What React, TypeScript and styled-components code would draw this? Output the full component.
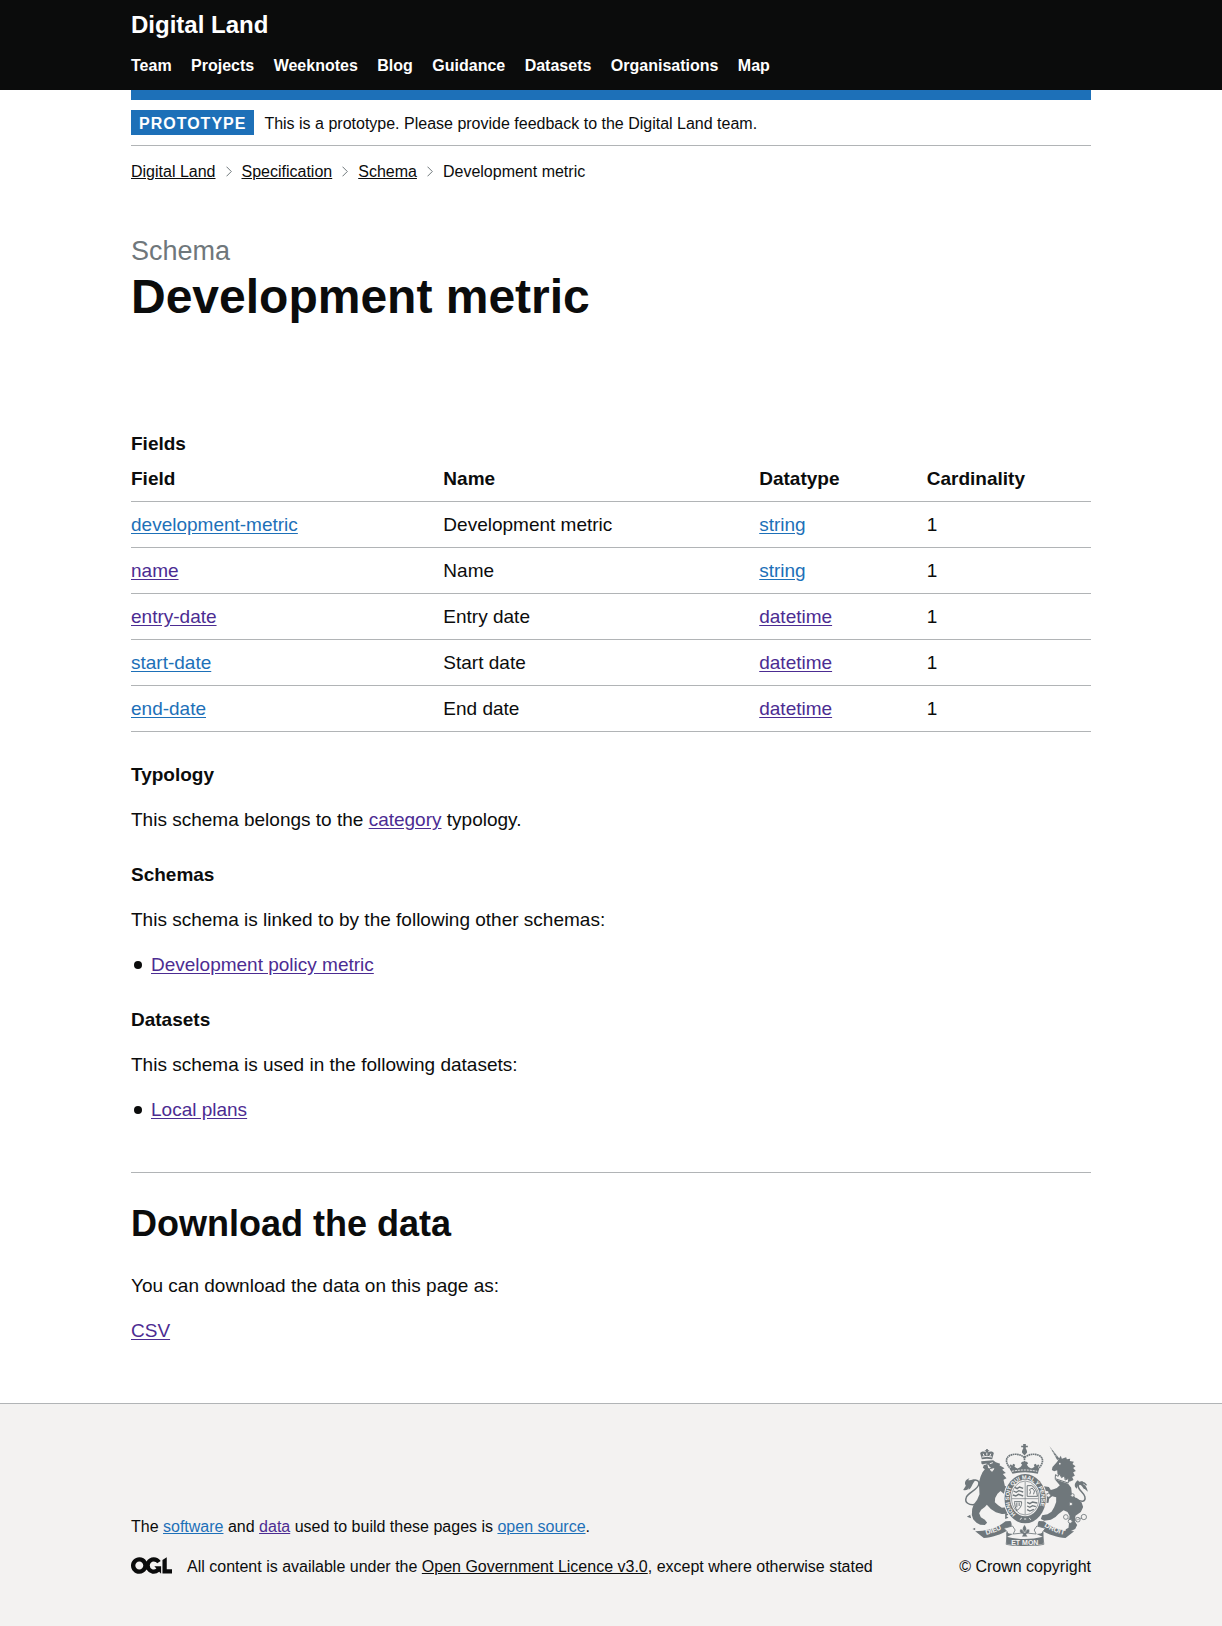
import React from "react";
import styled, { createGlobalStyle } from "styled-components";

const ink = "#0b0c0c";
const blue = "#1d70b8";
const purple = "#4c2c92";
const line = "#b1b4b6";
const grey = "#6f777b";
const pale = "#f3f2f1";

const GlobalStyle = createGlobalStyle`
  *, *::before, *::after { box-sizing: border-box; }
  body {
    margin: 0;
    background: #fff;
    color: ${ink};
    font: 400 19px/25px "Liberation Sans", Arial, Helvetica, sans-serif;
  }
`;

const Container = styled.div`
  width: 100%;
  max-width: 1020px;
  margin: 0 auto;
  padding: 0 30px;
`;

const Link = styled.a<{ $visited?: boolean; $plain?: boolean }>`
  color: ${(p) => (p.$plain ? ink : p.$visited ? purple : blue)};
  text-decoration: underline;
  text-underline-offset: 2px;
`;

const SmallLink = styled(Link)`
  text-underline-offset: 1px;
`;

const Header = styled.header`
  padding: 10px 0 14px;
  background: ${ink};
`;

const SiteName = styled.a`
  display: block;
  color: #fff;
  font-size: 24px;
  font-weight: 700;
  line-height: 30px;
  text-decoration: none;
`;

const NavList = styled.ul`
  margin: 16px 0 0;
  padding: 0;
  font-size: 16px;
  line-height: 20px;
  list-style: none;

  li {
    display: inline;
    margin-right: 15px;
  }
`;

const NavLink = styled.a`
  color: #fff;
  font-weight: 700;
  text-decoration: none;
`;

const BlueBar = styled.div`
  height: 10px;
  background: ${blue};
`;

const PhaseBanner = styled.div`
  display: flex;
  align-items: baseline;
  gap: 10px;
  padding: 10px 0;
  border-bottom: 1px solid ${line};
  font-size: 16px;
  line-height: 20px;
`;

const Tag = styled.strong`
  padding: 4px 8px 1px;
  background: ${blue};
  color: #fff;
  letter-spacing: 1px;
  text-transform: uppercase;
`;

const Crumbs = styled.ol`
  display: flex;
  flex-wrap: wrap;
  gap: 5px 10px;
  margin: 16px 0 9px;
  padding: 0;
  font-size: 16px;
  line-height: 20px;
  list-style: none;
`;

const Crumb = styled.li`
  display: flex;
  align-items: center;
  gap: 10px;
`;

const Main = styled.main`
  padding: 45px 0 40px;
`;

const Caption = styled.span`
  display: block;
  margin-bottom: 5px;
  color: ${grey};
  font-size: 27px;
  line-height: 30px;
`;

const PageTitle = styled.h1`
  margin: 0 0 108px;
  font-size: 48px;
  line-height: 52px;
`;

const Table = styled.table`
  width: 100%;
  margin-bottom: 30px;
  border-collapse: collapse;
  text-align: left;

  caption {
    font-weight: 700;
    text-align: left;
  }

  th, td {
    padding: 10px 20px 10px 0;
    border-bottom: 1px solid ${line};
  }

  th:last-child, td:last-child {
    padding-right: 0;
  }
`;

const Section = styled.section`
  margin-bottom: 30px;
`;

const SmallHeading = styled.h2`
  margin: 0 0 20px;
  font-size: 19px;
  line-height: 25px;
`;

const Text = styled.p`
  margin: 0 0 20px;

  &:last-child {
    margin-bottom: 0;
  }
`;

const BulletList = styled.ul`
  margin: 0;
  padding: 0 0 0 3px;
  list-style: none;

  li {
    display: flex;
    align-items: center;
    gap: 9px;
  }

  li::before {
    content: "";
    width: 8px;
    height: 8px;
    border-radius: 50%;
    background: ${ink};
  }
`;

const Download = styled.section`
  margin: 50px 0 20px;
  padding-top: 30px;
  border-top: 1px solid ${line};
`;

const LargeHeading = styled.h2`
  margin: 0 0 28px;
  font-size: 36px;
  line-height: 42px;
`;

const Footer = styled.footer`
  padding: 40px 0 49px;
  border-top: 1px solid ${line};
  background: ${pale};
  font-size: 16px;
  line-height: 20px;
`;

const FooterRow = styled.div`
  display: flex;
  flex-wrap: wrap;
  align-items: flex-end;
  justify-content: space-between;
  gap: 30px;
`;

const FooterNotes = styled.div`
  display: grid;
  gap: 20px;
`;

const Licence = styled.div`
  display: flex;
  align-items: flex-start;
  gap: 15px;
`;

const Copyright = styled.a`
  display: flex;
  flex-direction: column;
  align-items: center;
  gap: 11px;
  color: ${ink};
  text-decoration: none;
`;

const Chevron = () => (
  <svg width="6" height="12" viewBox="0 0 6 12" fill="none" stroke={grey} aria-hidden="true">
    <path d="M.5 .7 5.3 5.5 .5 10.3" />
  </svg>
);

const OglLogo = () => (
  <svg width="41" height="17" viewBox="0 0 483.2 195.7" fill={ink} role="img" aria-label="Open Government Licence">
    <path d="M421.5 142.8V.1l-50.7 32.3v161.1h112.4v-50.7zm-122.3-9.6A47.12 47.12 0 0 1 221 97.8c0-26 21.1-47.1 47.1-47.1 16.7 0 31.4 8.7 39.7 21.8l42.7-27.2A97.63 97.63 0 0 0 268.1 0c-36.5 0-68.3 20.1-85.1 49.7A98 98 0 0 0 97.8 0C43.9 0 0 43.9 0 97.8s43.9 97.8 97.8 97.8c36.5 0 68.3-20.1 85.1-49.7a97.76 97.76 0 0 0 149.6 25.4l19.4 22.2h3v-87.8h-80l24.3 27.5zM97.8 145c-26 0-47.1-21.1-47.1-47.1s21.1-47.1 47.1-47.1 47.1 21.1 47.1 47.1S123.8 145 97.8 145" />
  </svg>
);

const Crest = () => (
  <svg width="125" height="102" viewBox="37.5 27 375 306" fill={grey} aria-hidden="true">
    {/* lion */}
    <g>
      <path d="M94 73 89 54c6-6 13-5 17-2v-3h-3v-3h4v-4h5v4h4v3h-3v3c5-3 12-4 17 2l-5 19q-16-4-31 0z" />
      <path d="M94 66q16-4 31 0M98 56l3 7M121 56l-3 7M109 53v8" stroke={pale} strokeWidth="3" fill="none" />
      <path d="M92 79 128 76l8 6 13 4-2 5 15 9-7 4 11 10-9 3 11 13-9 4 4 18 14 8 0 8 10 8-5 11-12-2-10-9-10-8-9 8-7 13-1 13 10 9 11 7 15-1 8 9-7 10-16 1-18-5-15-10-12-13-6 7-11 8-6 11 5 12 12 7 7 9-7 7-14-1-11-6-10-10-4-13 1-18 5-14 10-14 7-16-1-20-1-15 5-18 6-13 7-9-6-5 3-8-7-4z" />
      <path d="m98 89 10-2M118 86l9-3M112 89l3 10 5-1M119 104l11-3-5 8z" stroke={pale} strokeWidth="3" fill={pale} />
      <path d="M76 208c-22 4-34-6-29-20 4-15 36-23 38-41 2-14-15-15-25-5" fill="none" stroke={grey} strokeWidth="4.5" />
      <path d="M76 135c-9-5-16 2-23 1 2-3 3-5 4-6-12 3-17 14-11 22l-8 13c8 3 16-1 18-8l-2 7c11-5 10-19 22-29z" />
      <path d="m62 250-13-5 10-6zM74 278l-8 4 8 4zM164 235l11 3-8 5 7 5-10 4z" />
    </g>
    {/* unicorn */}
    <g>
      <path d="m297 34 23 41 7-4z" />
      <path d="m300 43 7 1M306 53l7 1M311 62l8 1" stroke={pale} strokeWidth="1.5" />
      <path d="m325 71 6-9 3 9 13-4 2 6 10-2-1 7 12 2-4 7 9 7-7 5 8 9-8 4 5 10-8 4 4 9-12 5-10-8-12-5-14-9-1-12-9 3-7-4 2-9 14-16z" />
      <circle cx="328" cy="86" r="2.5" fill={pale} />
      <path d="m315 119 8 5 5-8 5 12 9-6 2 13 11-5-2 14-39-13z" fill={pale} stroke={grey} strokeWidth="3" />
      <path d="m312 132 41 14 9 12 2 18 12 13 17 13 5 14-7 15-16 11-2 17 7 11-6 12-14 7-16 2 2-8 8-5 2-18 1-18-6-11-12-5-15 11-9 9-14 8-20 3-10-5 4-11 16-3 12-8 8-13 6-16 0-14-12-3-9 7-2 12-10 2-5-10 6-8-7-5 3-7 14 2-2-8-14-2-9 6-8-5 6-9 12-5 15 2 6 9 8-2 10-4 9-8z" />
      <path d="M376 190c15 13 31 12 27-5-3-13-25-23-19-35 4-10 17-10 24 1" fill="none" stroke={grey} strokeWidth="4.5" />
      <path d="M412 170c-3-14-9-22-15-23 6-9-4-10-11-7l-4-4c-11 8-12 20-3 25 2-8 4-11 8-12 9 1 10 13 16 13z" />
      <g fill={pale} stroke={grey} strokeWidth="2.5">
        <circle cx="294" cy="181" r="6" />
        <circle cx="366" cy="181" r="5" />
        <circle cx="361" cy="207" r="5" />
        <circle cx="346" cy="246" r="7" />
        <circle cx="359" cy="259" r="6" />
        <circle cx="382" cy="254" r="7" />
        <circle cx="400" cy="246" r="8" />
      </g>
      <path d="M353 251c12 5 20 7 28 3s10-4 14-5" fill="none" stroke={grey} strokeWidth="2" />
    </g>
    {/* garter and shield */}
    <g>
      <ellipse cx="224" cy="191" rx="65" ry="77" fill={pale} />
      <ellipse cx="224" cy="191" rx="62" ry="74" />
      <ellipse cx="224" cy="189" rx="45" ry="55" fill={pale} />
      <ellipse cx="224" cy="189" rx="41" ry="51" fill="none" stroke={grey} strokeWidth="2" />
      <path d="M224 140v99M184 191h80" stroke={grey} strokeWidth="2" />
      <g stroke={grey} strokeWidth="4" fill="none">
        <path d="m193 157 7 4 7-5 11 4M189 168l8 4 8-5 13 4M187 180l9 3 8-5 14 5" />
        <path d="m230 202 8 4 8-5 14 3M230 213l8 4 8-5 10 3M230 224l8 4 12-5" />
        <path d="M230 184v-32h14q14 8 17 32zM238 178l2-8-3-6 8-5 7 9-3 10" strokeWidth="3" />
        <path d="M191 200h22c2 12-6 24-17 27M192 202q1 14 7 26M199 203v14M206 203v10" strokeWidth="3" />
      </g>
      <defs>
        <path id="garterArc" d="M196 238A48 58 0 1 1 252 238" />
        <path id="ribbonLeft" d="M107 300q30-7 57-25" />
        <path id="ribbonRight" d="M281 274q24 17 62 26" />
      </defs>
      <text fontSize="17" fontWeight="700" fill={pale} fontFamily="Liberation Sans, sans-serif">
        <textPath href="#garterArc">HONI SOIT QUI MAL Y PENSE</textPath>
      </text>
      <path d="M208 254l6-5M221 252h6M236 249l5 5" stroke={pale} strokeWidth="3" />
    </g>
    {/* crown */}
    <g>
      <path d="M218 37h-6v-5h6v-5h8v5h6v5h-6v5h-8zM214 52l3-10h10l3 10-8 6z" />
      <circle cx="222" cy="51" r="7" />
      <path d="M182 103C166 87 162 69 179 61c16-7 33-2 43 7 10-9 27-14 43-7 17 8 13 26-3 42z" fill={pale} stroke={grey} strokeWidth="5" strokeDasharray="5 1.5" />
      <path d="M222 56v38" fill="none" stroke={grey} strokeWidth="5" strokeDasharray="5 2" />
      <path d="m179 104 2-8-4-4 4-4 4 4 3-6 6 3-2 6 9 6 9-5 5-7-4-4 4-5h14l4 5-4 4 5 7 9 5 9-6-2-6 6-3 3 6 4-4 4 4-4 4 2 8-3 12q-38-9-76 0z" />
      <path d="M184 109q38-8 76 0" stroke={pale} strokeWidth="3" strokeDasharray="6 3" fill="none" />
    </g>
    {/* motto ribbon */}
    <g>
      <path d="M74 289q56-1 91-30l15-1c5 7 5 17-2 24-29 19-54 25-78 27z" />
      <path d="M371 289q-56-1-91-30l-15-1c-5 7-5 17 2 24 29 19 54 25 78 27z" />
      <path d="m160 280 26-7 8 12-6 12q34-7 69 0l-6-12 8-12 26 7-9 11 4 37q-57 13-113 0l4-37z" fill={pale} stroke={grey} strokeWidth="2.5" />
      <path d="M168 305q54 14 110 0v21q-55 14-110 0z" />
      <path d="M167 291q7 6 21 6l-20 9zM279 291q-7 6-21 6l20 9z" />
      <path d="M222 269q12 15 1 25 1-13 13-11 5 12-9 14l4 8h-17l4-8q-14-2-9-14 12-2 13 11-12-10 0-25z" stroke={pale} strokeWidth="1" />
      <g fontSize="21" fontWeight="700" fill={pale} fontFamily="Liberation Sans, sans-serif">
        <text><textPath href="#ribbonLeft">DIEU</textPath></text>
        <text x="223" y="329" textAnchor="middle">ET MON</text>
        <text><textPath href="#ribbonRight">DROIT</textPath></text>
      </g>
    </g>
  </svg>
);

const navItems = ["Team", "Projects", "Weeknotes", "Blog", "Guidance", "Datasets", "Organisations", "Map"];
const crumbs = ["Digital Land", "Specification", "Schema"];

const fields = [
  { field: "development-metric", seen: false, name: "Development metric", type: "string", typeSeen: false },
  { field: "name", seen: true, name: "Name", type: "string", typeSeen: false },
  { field: "entry-date", seen: true, name: "Entry date", type: "datetime", typeSeen: true },
  { field: "start-date", seen: false, name: "Start date", type: "datetime", typeSeen: true },
  { field: "end-date", seen: false, name: "End date", type: "datetime", typeSeen: true },
];

export default function App() {
  return (
    <>
      <GlobalStyle />
      <Header>
        <Container>
          <SiteName href="#">Digital Land</SiteName>
          <nav aria-label="Main">
            <NavList>
              {navItems.map((item) => (
                <React.Fragment key={item}>
                  <li><NavLink href="#">{item}</NavLink></li>{" "}
                </React.Fragment>
              ))}
            </NavList>
          </nav>
        </Container>
      </Header>

      <Container>
        <BlueBar />
        <PhaseBanner>
          <Tag>Prototype</Tag>
          <span>This is a prototype. Please provide feedback to the Digital Land team.</span>
        </PhaseBanner>
        <nav aria-label="Breadcrumb">
          <Crumbs>
            {crumbs.map((crumb) => (
              <Crumb key={crumb}>
                <SmallLink href="#" $plain>{crumb}</SmallLink>
                <Chevron />
              </Crumb>
            ))}
            <Crumb aria-current="page">Development metric</Crumb>
          </Crumbs>
        </nav>

        <Main>
          <Caption>Schema</Caption>
          <PageTitle>Development metric</PageTitle>

          <Table>
            <caption>Fields</caption>
            <thead>
              <tr>
                <th scope="col">Field</th>
                <th scope="col">Name</th>
                <th scope="col">Datatype</th>
                <th scope="col">Cardinality</th>
              </tr>
            </thead>
            <tbody>
              {fields.map((row) => (
                <tr key={row.field}>
                  <td><Link href="#" $visited={row.seen}>{row.field}</Link></td>
                  <td>{row.name}</td>
                  <td><Link href="#" $visited={row.typeSeen}>{row.type}</Link></td>
                  <td>1</td>
                </tr>
              ))}
            </tbody>
          </Table>

          <Section>
            <SmallHeading>Typology</SmallHeading>
            <Text>This schema belongs to the <Link href="#" $visited>category</Link> typology.</Text>
          </Section>
          <Section>
            <SmallHeading>Schemas</SmallHeading>
            <Text>This schema is linked to by the following other schemas:</Text>
            <BulletList>
              <li><Link href="#" $visited>Development policy metric</Link></li>
            </BulletList>
          </Section>
          <Section>
            <SmallHeading>Datasets</SmallHeading>
            <Text>This schema is used in the following datasets:</Text>
            <BulletList>
              <li><Link href="#" $visited>Local plans</Link></li>
            </BulletList>
          </Section>

          <Download>
            <LargeHeading>Download the data</LargeHeading>
            <Text>You can download the data on this page as:</Text>
            <Text><Link href="#" $visited>CSV</Link></Text>
          </Download>
        </Main>
      </Container>

      <Footer>
        <Container>
          <FooterRow>
            <FooterNotes>
              <div>
                The <SmallLink href="#">software</SmallLink> and <SmallLink href="#" $visited>data</SmallLink> used to
                build these pages is <SmallLink href="#">open source</SmallLink>.
              </div>
              <Licence>
                <OglLogo />
                <span>
                  All content is available under the{" "}
                  <SmallLink href="#" $plain>Open Government Licence v3.0</SmallLink>, except where otherwise stated
                </span>
              </Licence>
            </FooterNotes>
            <Copyright href="#">
              <Crest />
              <span>© Crown copyright</span>
            </Copyright>
          </FooterRow>
        </Container>
      </Footer>
    </>
  );
}
